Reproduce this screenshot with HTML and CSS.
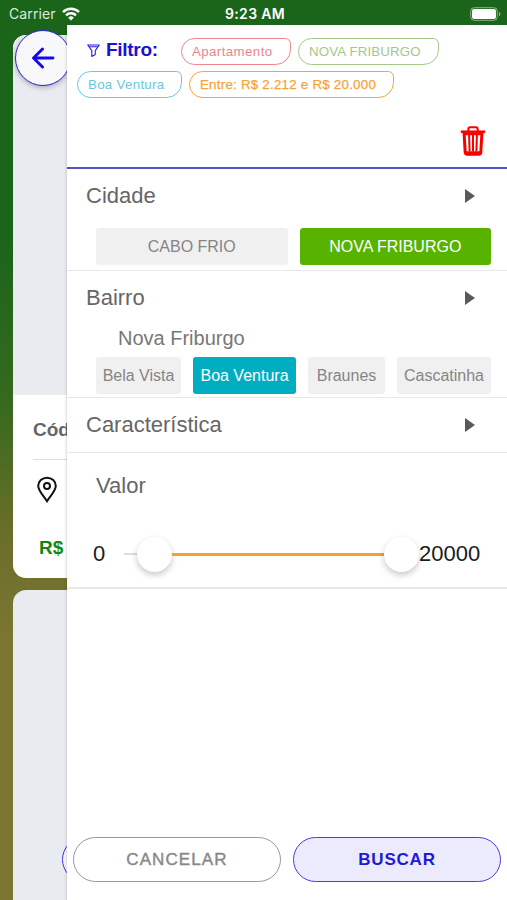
FILE: index.html
```html
<!DOCTYPE html>
<html lang="pt-BR">
<head>
  <meta charset="UTF-8" />
  <meta name="viewport" content="width=device-width, initial-scale=1.0" />
  <title>Filtro</title>
  <link rel="stylesheet" href="styles.css">
</head>
<body>
  <header class="status-bar">
    <div class="carrier">
      <span>Carrier</span>
      <svg class="wifi" viewBox="0 0 18 14" fill="none" stroke="#fff" stroke-width="2.4">
        <path d="M1 5.1a11.4 11.4 0 0 1 16 0M4 8.3a7.1 7.1 0 0 1 10 0" />
        <path d="M9 13.5 6.2 10.7a4 4 0 0 1 5.6 0z" fill="#fff" stroke="none" />
      </svg>
    </div>
    <span class="time">9:23 AM</span>
    <svg class="battery" viewBox="0 0 31 14">
      <rect x=".7" y=".7" width="26.6" height="12.6" rx="3.5" fill="none" stroke="#8db28d" />
      <rect x="2" y="2" width="24" height="10" rx="2" fill="#fff" />
      <path d="M29 4.7q3 2.3 0 4.6z" fill="#8db28d" />
    </svg>
  </header>

  <main class="listing">
    <article class="card">
      <div class="photo"></div>
      <div class="card-body">
        <h3>Cód</h3>
        <div class="place">
          <svg viewBox="0 0 20 26" fill="none" stroke="#111" stroke-width="2">
            <path d="M10 24.7C7.5 20.7 1.2 14.1 1.2 9.4a8.8 8.2 0 0 1 17.6 0c0 4.7-6.3 11.3-8.8 15.3z" />
            <circle cx="10" cy="9.5" r="3" />
          </svg>
        </div>
        <p class="price">R$</p>
      </div>
    </article>
    <article class="card last">
      <div class="photo"></div>
    </article>
    <button class="back">
      <svg viewBox="0 0 24 22" fill="none" stroke="#1408f0" stroke-width="2.9" stroke-linecap="round" stroke-linejoin="round">
        <path d="M11.5 2 2.5 11l9 9M3 11h19" />
      </svg>
    </button>
    <button class="more"></button>
  </main>

  <aside class="drawer">
    <div class="summary">
      <div class="chips">
        <h1>
          <svg viewBox="0 0 13 13" fill="none" stroke="#2a20dd" stroke-width="1.1" stroke-linejoin="round">
            <path d="M.7 1h11.6L8.3 6.6v3.8l-3.5 2V6.6z M2.2 2.8h8.6" />
          </svg>
          Filtro:
        </h1>
        <span class="chip type">Apartamento</span>
        <span class="chip city">NOVA FRIBURGO</span>
      </div>
      <div class="chips">
        <span class="chip district">Boa Ventura</span>
        <span class="chip range">Entre: R$ 2.212 e R$ 20.000</span>
      </div>
      <button class="trash">
        <svg viewBox="0 0 26 30" fill="none" stroke="#f80000" stroke-width="2">
          <path d="M8.3 5V3.2Q8.3 1.2 10.3 1.2h5.4q2 0 2 2V5" />
          <path d="M.8 5.7h24.4" stroke-width="2.5" />
          <path d="M4 6l1.2 20.2q.1 2 2 2h11.6q1.9 0 2-2L22 6" stroke-width="3" />
          <path d="M9.1 9l.5 16.5M13 9v16.5M16.9 9l-.5 16.5" />
          <path d="M5 8h16M6 26.5h14" stroke-width="2.4" />
        </svg>
      </button>
    </div>

    <section class="group cities">
      <div class="group-head"><h2>Cidade</h2><i class="arrow"></i></div>
      <div class="options">
        <button>CABO FRIO</button>
        <button class="green">NOVA FRIBURGO</button>
      </div>
    </section>

    <section class="group districts">
      <div class="group-head"><h2>Bairro</h2><i class="arrow"></i></div>
      <h4>Nova Friburgo</h4>
      <div class="options">
        <button>Bela Vista</button>
        <button class="teal">Boa Ventura</button>
        <button>Braunes</button>
        <button>Cascatinha</button>
      </div>
    </section>

    <section class="group features">
      <div class="group-head"><h2>Característica</h2><i class="arrow"></i></div>
    </section>

    <section class="value">
      <h2>Valor</h2>
      <div class="slider">
        <span class="min">0</span>
        <div class="track">
          <i class="rest"></i>
          <i class="knob"></i>
          <i class="bar"></i>
          <i class="knob"></i>
        </div>
        <span>20000</span>
      </div>
    </section>

    <footer class="actions">
      <button class="cancel">CANCELAR</button>
      <button class="search">BUSCAR</button>
    </footer>
  </aside>
</body>
</html>
```

FILE: styles.css
```css
* {
  box-sizing: border-box;
}
body {
  margin: 0;
  height: 900px;
  position: relative;
  overflow: hidden;
  font-family: "Liberation Sans", Arial, sans-serif;
  background: linear-gradient(#1b651b 0, #1b651b 240px, #35691e 400px, #6c6e29 540px, #7b7632 640px, #7b7632 100%);
}
h1, h2, h3, h4, p {
  margin: 0;
  font-weight: normal;
}
button {
  padding: 0;
  border: none;
  font-family: inherit;
  cursor: pointer;
}
svg {
  display: block;
}
.status-bar {
  height: 25px;
  padding: 2px 6px 0 9px;
  display: grid;
  grid-template-columns: 1fr auto 1fr;
  align-items: center;
  color: #fff;
  font-family: Inter, sans-serif;
  font-size: 14px;
}
.carrier {
  display: flex;
  align-items: center;
  gap: 6px;
  color: #dbe9db;
  letter-spacing: 0.1px;
}
.wifi {
  width: 18px;
  height: 14px;
}
.time {
  font-weight: 600;
  letter-spacing: 0.35px;
}
.battery {
  width: 31px;
  height: 14px;
  justify-self: end;
}

.listing {
  height: 875px;
  padding: 10px 13px 0;
  overflow: hidden;
}
.card {
  height: 543px;
  margin-bottom: 12px;
  border-radius: 13px;
  background: #fff;
  overflow: hidden;
}
.photo {
  height: 360px;
  background: #e8ecf0;
}
.last {
  height: 310px;
  margin: 0;
  border-radius: 13px 13px 0 0;
}
.card-body {
  padding: 23px 20px 0;
}
.card h3 {
  height: 42px;
  padding-top: 1px;
  border-bottom: 1px solid #ddd;
  font-size: 19px;
  font-weight: bold;
  color: #666;
  width: 34px;
  overflow: hidden;
}
.place {
  padding: 16px 0 0 4px;
}
.place svg {
  width: 20px;
  height: 27px;
}
.price {
  margin: 34px 0 0 6px;
  font-size: 19px;
  font-weight: bold;
  color: #0a8a12;
}
.back {
  position: absolute;
  left: 15px;
  top: 30px;
  width: 56px;
  height: 56px;
  display: flex;
  align-items: center;
  justify-content: center;
  border: 1.5px solid #2a20d0;
  border-radius: 50%;
  background: #f8f8fb;
  box-shadow: 0 2px 5px rgba(0, 0, 0, 0.25);
}
.back svg {
  width: 24px;
  height: 22px;
}
.more {
  position: absolute;
  left: 62px;
  top: 837px;
  width: 100px;
  height: 45px;
  border: 1.5px solid #3a30e0;
  border-radius: 23px;
  background: #f8f8fb;
}

.drawer {
  position: absolute;
  left: 67px;
  right: 0;
  top: 25px;
  bottom: 0;
  display: flex;
  flex-direction: column;
  background: #fff;
  box-shadow: 0 0 3px rgba(0, 0, 0, 0.25);
  clip-path: inset(0 0 0 -3px);
}
.summary {
  height: 144px;
  padding: 13px 10px 0;
  border-bottom: 2px solid #5552cc;
}
.chips {
  display: flex;
  height: 33px;
  gap: 7px;
}
.summary h1 {
  width: 97px;
  height: 24px;
  padding-left: 10px;
  display: flex;
  align-items: center;
  gap: 6px;
  font-size: 19px;
  font-weight: bold;
  letter-spacing: -0.3px;
  color: #1b10d5;
}
.summary h1 svg {
  width: 13px;
  height: 13px;
}
.chip {
  height: 27px;
  padding-left: 10px;
  border: 1.5px solid;
  border-radius: 14px 6px 16px 14px;
  font-size: 13.3px;
  line-height: 25px;
  white-space: nowrap;
}
.type {
  width: 110px;
  letter-spacing: 0.4px;
  color: #ee858b;
}
.city {
  width: 141px;
  letter-spacing: 0.15px;
  color: #a2c987;
}
.district {
  width: 105px;
  letter-spacing: 0.3px;
  color: #6bc8dc;
}
.range {
  width: 205px;
  letter-spacing: 0.25px;
  color: #f5a33b;
  -webkit-text-stroke: 0.25px;
}
.trash {
  display: block;
  width: 26px;
  margin: 22px 11px 0 auto;
  background: none;
}
.trash svg {
  width: 26px;
  height: 30px;
}

.group {
  border-bottom: 1.5px solid #e9e9e9;
}
.group-head {
  height: 54px;
  padding: 0 32px 0 19px;
  display: flex;
  align-items: center;
  justify-content: space-between;
}
.group h2, .value h2 {
  font-size: 22px;
  color: #666;
}
.arrow {
  border-left: 10px solid #595959;
  border-top: 7px solid transparent;
  border-bottom: 7px solid transparent;
}
.options {
  display: grid;
  gap: 12px;
  padding: 0 16px 0 29px;
}
.options button {
  height: 37px;
  border-radius: 3px;
  background: #f0f0f0;
  color: #858585;
  font-size: 16px;
  white-space: nowrap;
}
.options .green {
  background: #57b300;
  color: #fff;
}
.options .teal {
  background: #00adc1;
  color: #fff;
}
.cities {
  height: 102px;
}
.cities .options {
  grid-template-columns: 1fr 1fr;
  padding-top: 5px;
}
.districts {
  height: 127px;
}
.group h4 {
  height: 32px;
  padding: 2px 0 0 51px;
  font-size: 20px;
  color: #777;
}
.districts .options {
  grid-template-columns: 85px 103px 77px 1fr;
}
.features {
  height: 55px;
}
.value {
  height: 136px;
  padding-top: 20px;
  border-bottom: 2px solid #e8e8e8;
}
.value h2 {
  padding-left: 29px;
}
.slider {
  display: flex;
  align-items: center;
  height: 36px;
  margin-top: 37px;
  padding-left: 26px;
  font-size: 22px;
  color: #1c1c1c;
}
.min {
  width: 31px;
}
.track {
  width: 295px;
  display: flex;
  align-items: center;
}
.rest {
  width: 13px;
  height: 2px;
  background: #ddd;
}
.bar {
  flex: 1;
  height: 3px;
  background: #f5a12c;
}
.knob {
  width: 35px;
  height: 35px;
  border-radius: 50%;
  background: #fff;
  box-shadow: 0 3px 6px rgba(0, 0, 0, 0.22);
}
.actions {
  display: flex;
  gap: 12px;
  margin-top: auto;
  padding: 0 6px 18px;
}
.actions button {
  flex: 1;
  height: 45px;
  border-radius: 23px;
  border: 1.5px solid #999;
  background: #fff;
  font-size: 17px;
  letter-spacing: 1.1px;
  color: #888;
  -webkit-text-stroke: 0.4px;
}
.actions .search {
  border-color: #4840dd;
  background: #ecebfd;
  font-weight: bold;
  letter-spacing: 0.8px;
  color: #2018dd;
  -webkit-text-stroke: 0;
}
```
